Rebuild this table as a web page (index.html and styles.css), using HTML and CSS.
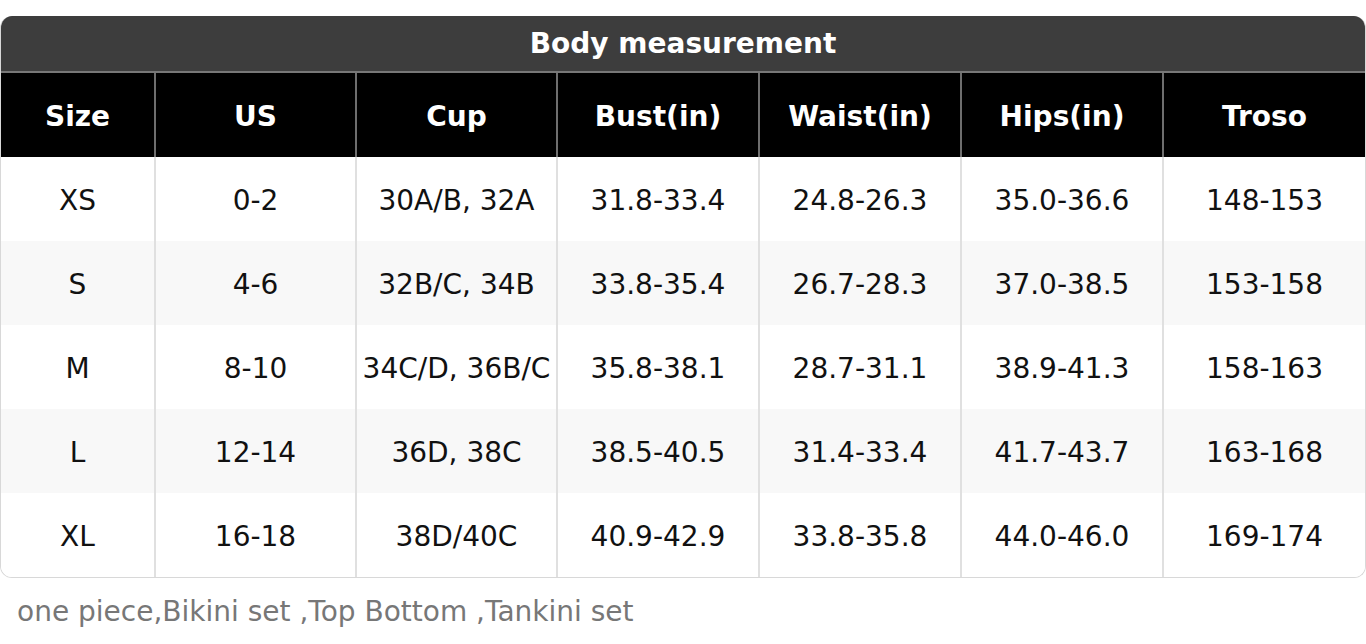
FILE: index.html
```html
<!DOCTYPE html>
<html>
<head>
<meta charset="utf-8">
<link rel="stylesheet" href="styles.css">
</head>
<body>
<div class="card">
  <div class="title">Body measurement</div>
  <div class="grid">
    <div class="h">Size</div><div class="h">US</div><div class="h">Cup</div><div class="h">Bust(in)</div><div class="h">Waist(in)</div><div class="h">Hips(in)</div><div class="h">Troso</div>

    <div class="c">XS</div><div class="c">0-2</div><div class="c">30A/B, 32A</div><div class="c">31.8-33.4</div><div class="c">24.8-26.3</div><div class="c">35.0-36.6</div><div class="c">148-153</div>

    <div class="c alt">S</div><div class="c alt">4-6</div><div class="c alt">32B/C, 34B</div><div class="c alt">33.8-35.4</div><div class="c alt">26.7-28.3</div><div class="c alt">37.0-38.5</div><div class="c alt">153-158</div>

    <div class="c">M</div><div class="c">8-10</div><div class="c">34C/D, 36B/C</div><div class="c">35.8-38.1</div><div class="c">28.7-31.1</div><div class="c">38.9-41.3</div><div class="c">158-163</div>

    <div class="c alt">L</div><div class="c alt">12-14</div><div class="c alt">36D, 38C</div><div class="c alt">38.5-40.5</div><div class="c alt">31.4-33.4</div><div class="c alt">41.7-43.7</div><div class="c alt">163-168</div>

    <div class="c">XL</div><div class="c">16-18</div><div class="c">38D/40C</div><div class="c">40.9-42.9</div><div class="c">33.8-35.8</div><div class="c">44.0-46.0</div><div class="c">169-174</div>
  </div>
</div>
<p class="note">one piece,Bikini set ,Top Bottom ,Tankini set</p>
</body>
</html>
```
FILE: styles.css
```css
html, body {
  margin: 0;
  padding: 0;
  background: #fff;
  font-family: "DejaVu Sans", sans-serif;
}
body {
  padding-top: 16px;
}
.card {
  border: 1px solid #d8d8d8;
  border-top: none;
  border-radius: 12px;
  overflow: hidden;
}
.title {
  height: 55px;
  background: #3d3d3d;
  color: #fff;
  font-weight: bold;
  font-size: 28px;
  display: flex;
  align-items: center;
  justify-content: center;
  border-bottom: 2px solid #777;
}
.grid {
  display: grid;
  grid-template-columns: 155px 201px 201px 202px 202px 202px 201px;
}
.h, .c {
  height: 84px;
  display: flex;
  align-items: center;
  justify-content: center;
  padding-top: 2px;
  font-size: 28px;
  white-space: nowrap;
  border-right: 2px solid #e0e0e0;
  box-sizing: border-box;
}
.h {
  background: #000;
  color: #fff;
  font-weight: bold;
  border-right-color: #6e6e6e;
}
.c {
  color: #111;
  background: #fff;
}
.c.alt {
  background: #f8f8f8;
}
.grid > div:nth-child(7n) {
  border-right: none;
}
.note {
  margin: 17px 0 0 0;
  padding-left: 17px;
  font-size: 28px;
  color: #777;
}
```
